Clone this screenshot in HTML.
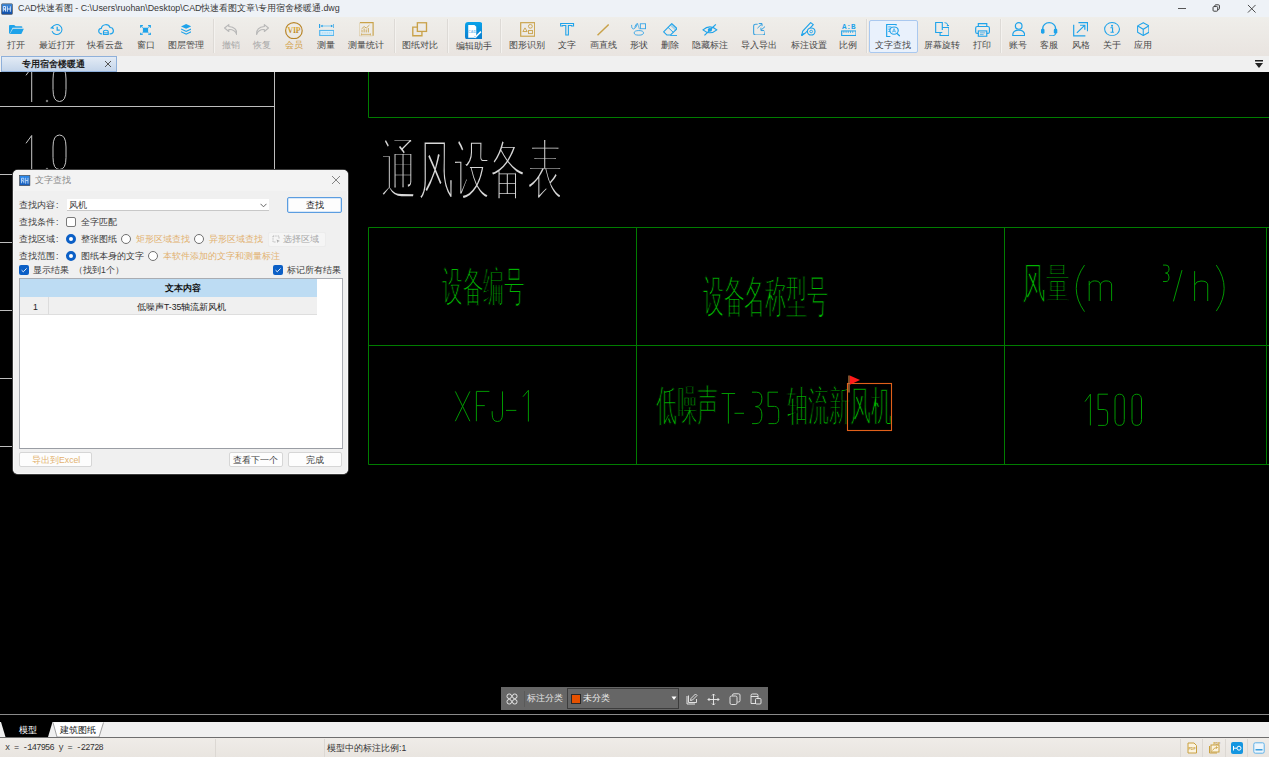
<!DOCTYPE html>
<html><head><meta charset="utf-8">
<style>
*{box-sizing:border-box;margin:0;padding:0}
html,body{width:1269px;height:757px;overflow:hidden;background:#000;font-family:"Liberation Sans",sans-serif}
.a{position:absolute}
#title{left:0;top:0;width:1269px;height:17px;background:#eef2f7}
#tb{left:0;top:17px;width:1269px;height:39px;background:linear-gradient(#efeeea,#e9e4e0)}
#tabs{left:0;top:56px;width:1269px;height:16px;background:#f0f0f0}
#canvas{left:0;top:72px;width:1269px;height:650px;background:#000;overflow:hidden}
#btabs{left:0;top:722px;width:1269px;height:16px;background:#f0f0f0}
#status{left:0;top:738px;width:1269px;height:19px;background:linear-gradient(#efece8,#e9e5e0)}
.lbl{position:absolute;top:24px;font-size:8.7px;color:#3e3e3e;white-space:nowrap;transform:translateX(-50%);line-height:10px}
.ic{position:absolute;top:5px;width:18px;height:18px;transform:translateX(-50%)}
.sep{position:absolute;top:2px;width:1px;height:34px;background:#dddad6;box-shadow:1px 0 0 #f4f2ef}
.dt{position:absolute;font-size:8.7px;line-height:10px;white-space:nowrap;color:#3c3c3c}
.rad{position:absolute;width:10px;height:10px;border-radius:50%;border:1px solid #707070;background:#fff}
.radon{position:absolute;width:10px;height:10px;border-radius:50%;background:#fff;border:3px solid #0b5fc6}
.cb{position:absolute;width:10px;height:10px;border:1px solid #7a7a7a;border-radius:2px;background:#fff}
.cbon{position:absolute;width:10px;height:10px;border-radius:2px;background:#0b5fc6}
.btn{position:absolute;background:#fdfdfd;border:1px solid #d6d6d6;border-radius:2px}
.or{color:#e2b270}
#dlg .dt{margin-top:0}
</style></head><body>
<div id="title" class="a">
  <svg class="a" style="left:1px;top:2.5px" width="12" height="12" viewBox="0 0 12 12"><defs><linearGradient id="tg" x1="0" y1="0" x2="0" y2="1"><stop offset="0" stop-color="#3a8ae0"/><stop offset="1" stop-color="#0c4aa6"/></linearGradient></defs><rect x="0.5" y="0.8" width="11" height="10.6" rx="0.8" fill="url(#tg)" stroke="#6b6b6b" stroke-width="0.8"/><path d="M2.3 3.5 V8.5 M2.3 3.5 H4.5 V8.5 M2.8 5 L4 7.2 M6.3 3.3 V8.8 M9.3 3.3 V8.8 M6.3 6 H9.3" stroke="#e8f2ff" stroke-width="0.9" fill="none"/></svg>
  <div class="a" style="left:18px;top:3px;font-size:8.9px;line-height:11px;color:#383838;white-space:nowrap">CAD快速看图 - C:\Users\ruohan\Desktop\CAD快速看图文章\专用宿舍楼暖通.dwg</div>
  <div class="a" style="left:1178px;top:8px;width:8px;height:1px;background:#555"></div>
  <svg class="a" style="left:1211.5px;top:4px" width="8.5" height="8" viewBox="0 0 10 10"><rect x="1" y="3.2" width="5.8" height="5.8" rx="1.2" fill="none" stroke="#3a3a3a" stroke-width="1.2"/><path d="M3.2 3.2 V2.2 Q3.2 1 4.4 1 H7.8 Q9 1 9 2.2 V5.6 Q9 6.8 7.8 6.8 H6.8" fill="none" stroke="#3a3a3a" stroke-width="1.2"/></svg>
  <svg class="a" style="left:1246.5px;top:3.5px" width="9.5" height="9.5" viewBox="0 0 10 10"><path d="M1 1 L9 9 M9 1 L1 9" stroke="#3a3a3a" stroke-width="0.95"/></svg>
</div>
<div id="tb" class="a">
<svg class="a" style="left:8.7px;top:8.1px" width="14.9" height="9.0" viewBox="2.0 3.5 14.50 11.00" preserveAspectRatio="none"><path d="M2 4.5 Q2 3.5 3 3.5 H7 L8.5 5 H14 Q15 5 15 6 V7 H5.5 L2.8 14 H2 Z" fill="#1fa3ea"/><path d="M5.8 8 H16.5 L14 14.5 H2.8 Z" fill="#1fa3ea"/></svg>
<div class="lbl" style="left:16px;top:23px;color:#484848">打开</div>
<svg class="a" style="left:50.1px;top:7.0px" width="12.6" height="11.0" viewBox="1.8 2.8 13.50 12.35" preserveAspectRatio="none"><path d="M4.2 6.5 A5.5 5.5 0 1 1 4 11" fill="none" stroke="#1fa3ea" stroke-width="1.15"/><path d="M1.8 7.5 L4.6 5 L6.2 8.3 Z" fill="#1fa3ea"/><path d="M9.5 6 V9.6 H12.3" fill="none" stroke="#1fa3ea" stroke-width="1.36"/></svg>
<div class="lbl" style="left:57px;top:23px;color:#484848">最近打开</div>
<svg class="a" style="left:97.7px;top:7.0px" width="16.1" height="11.0" viewBox="0.75 3.8 16.90 11.90" preserveAspectRatio="none"><path d="M5 14.5 H3.8 A3 3 0 0 1 4.2 8.6 A4.8 4.8 0 0 1 13.4 7.6 A3.5 3.5 0 0 1 14.2 14.5 H13" fill="none" stroke="#1fa3ea" stroke-width="1.27"/><path d="M6.5 15 V12.3 Q6.5 10.6 9 10.6 Q11.5 10.6 11.5 12.3 V15 Z" fill="none" stroke="#1fa3ea" stroke-width="1.19"/><path d="M6.5 13.2 H11.5" stroke="#1fa3ea" stroke-width="0.85"/></svg>
<div class="lbl" style="left:105px;top:23px;color:#484848">快看云盘</div>
<svg class="a" style="left:140.3px;top:7.6px" width="11.0" height="10.4" viewBox="1.6 1.6 14.80 14.80" preserveAspectRatio="none"><rect x="5.5" y="5.5" width="7" height="7" fill="#1fa3ea"/><path d="M2.5 5.5 V2.5 H5.5 M12.5 2.5 H15.5 V5.5 M15.5 12.5 V15.5 H12.5 M5.5 15.5 H2.5 V12.5" fill="none" stroke="#1fa3ea" stroke-width="1.53"/><path d="M3 3 L5.5 5.5 M15 3 L12.5 5.5 M15 15 L12.5 12.5 M3 15 L5.5 12.5" stroke="#1fa3ea" stroke-width="1.10"/></svg>
<div class="lbl" style="left:146px;top:23px;color:#484848">窗口</div>
<svg class="a" style="left:181.2px;top:7.3px" width="10.3" height="10.7" viewBox="3.0 2.0 12.00 13.50" preserveAspectRatio="none"><path d="M9 2 L15 5 L9 8 L3 5 Z" fill="#1fa3ea"/><path d="M3.2 7.6 L9 10.5 L14.8 7.6 L15 9 L9 12 L3 9 Z" fill="#1fa3ea"/><path d="M3.2 11 L9 14 L14.8 11 L15 12.5 L9 15.5 L3 12.5 Z" fill="#1fa3ea"/></svg>
<div class="lbl" style="left:186px;top:23px;color:#484848">图层管理</div>
<div class="sep" style="left:212.5px"></div>
<svg class="a" style="left:223.6px;top:7.0px" width="13.4" height="11.0" viewBox="1.95 3.45 12.65 11.10" preserveAspectRatio="none"><path d="M6.5 4 L2.5 7.5 L6.5 11 V9 Q12 8.5 14 14 Q14.5 6.5 6.5 6 Z" fill="none" stroke="#b8b8b8" stroke-width="1.1" stroke-linejoin="round"/></svg>
<div class="lbl" style="left:231px;top:23px;color:#a9a9a9">撤销</div>
<svg class="a" style="left:256.0px;top:7.0px" width="13.0" height="11.0" viewBox="3.4 3.45 12.65 11.10" preserveAspectRatio="none"><path d="M11.5 4 L15.5 7.5 L11.5 11 V9 Q6 8.5 4 14 Q3.5 6.5 11.5 6 Z" fill="none" stroke="#b8b8b8" stroke-width="1.1" stroke-linejoin="round"/></svg>
<div class="lbl" style="left:262px;top:23px;color:#a9a9a9">恢复</div>
<svg class="a" style="left:285.0px;top:5.0px" width="17.8" height="17.3" viewBox="0.2 0.2 17.60 17.60" preserveAspectRatio="none"><defs><linearGradient id="vg" x1="0" y1="0" x2="0" y2="1"><stop offset="0" stop-color="#e6b43c"/><stop offset="1" stop-color="#a8741a"/></linearGradient></defs><circle cx="9" cy="9" r="8.2" fill="none" stroke="#b8862a" stroke-width="1.2"/><text x="9" y="11.8" font-family="Liberation Serif" font-weight="bold" font-size="7.8" fill="url(#vg)" text-anchor="middle" letter-spacing="-0.3">VIP</text></svg>
<div class="lbl" style="left:294px;top:23px;color:#d2a24c">会员</div>
<svg class="a" style="left:318.5px;top:7.0px" width="15.5" height="12.1" viewBox="1.95 2.5 14.10 12.15" preserveAspectRatio="none"><path d="M2.5 2.5 V6.5 M15.5 2.5 V6.5" stroke="#1a9be6" stroke-width="0.94"/><path d="M4.5 4.5 H13.5" stroke="#8fd0f2" stroke-width="1.27"/><path d="M3.2 4.5 L5.2 3.2 V5.8 Z M14.8 4.5 L12.8 3.2 V5.8 Z" fill="#1a9be6"/><rect x="2.6" y="9" width="12.8" height="5" fill="#d9eefa" stroke="#55b6ee" stroke-width="1.10"/><path d="M4.5 11.5 H13.5" stroke="#8fd0f2" stroke-width="0.85" stroke-dasharray="1 0.6"/></svg>
<div class="lbl" style="left:326px;top:23px;color:#484848">测量</div>
<svg class="a" style="left:358.9px;top:5.4px" width="14.8" height="14.2" viewBox="2.15 1.35 14.00 14.50" preserveAspectRatio="none"><path d="M3 2 H15.5 V15.5" fill="none" stroke="#c9a24a" stroke-width="1.10"/><path d="M2.5 2.2 V15.5 H15" fill="none" stroke="#c9a24a" stroke-width="0.59" opacity="0.5"/><path d="M4.5 8.5 L7 6 L9 7.5 L12 4.5" fill="none" stroke="#c9a24a" stroke-width="0.85"/><path d="M5 12 V9.5 M7 12 V8 M9 12 V9 M11 12 V7.5" stroke="#c9a24a" stroke-width="0.85"/><path d="M4.5 14 H13 M4.5 13 V15 M13 13 V15" stroke="#c9a24a" stroke-width="0.68"/></svg>
<div class="lbl" style="left:366px;top:23px;color:#484848">测量统计</div>
<div class="sep" style="left:393.5px"></div>
<svg class="a" style="left:412.3px;top:5.4px" width="15.3" height="14.5" viewBox="2.3 1.8 13.40 13.40" preserveAspectRatio="none"><rect x="7" y="2.5" width="8" height="8" fill="none" stroke="#c9a24a" stroke-width="1.19"/><path d="M7 6.5 H3 V14.5 H11 V10.5" fill="none" stroke="#c9a24a" stroke-width="1.19"/></svg>
<div class="lbl" style="left:420px;top:23px;color:#484848">图纸对比</div>
<div class="sep" style="left:446.5px"></div>
<svg class="a" style="left:464.6px;top:4.5px" width="17.7" height="17.8" viewBox="0.5 0.5 17.00 17.00" preserveAspectRatio="none"><defs><linearGradient id="ag" x1="0" y1="0" x2="0" y2="1"><stop offset="0" stop-color="#0aa3ea"/><stop offset="1" stop-color="#0b7ccc"/></linearGradient></defs><rect x="0.5" y="0.5" width="17" height="17" rx="3.2" fill="url(#ag)"/><path d="M3.6 3.3 H9.6 L11.3 5 V15.5 H3.6 Z" fill="#fff"/><text x="7.3" y="10.8" font-family="Liberation Sans" font-weight="bold" font-size="3.6" fill="#7fc0ee" text-anchor="middle">CAD</text><path d="M9.3 15.2 L15.3 9.2 L16.3 10.2 L10.5 16 Z" fill="#fff"/><path d="M9.6 13.8 L10.8 15.2" stroke="#0b86d6" stroke-width="0.5"/></svg>
<div class="lbl" style="left:473.5px;top:24px;color:#484848">编辑助手</div>
<div class="sep" style="left:499.5px"></div>
<svg class="a" style="left:519.8px;top:5.0px" width="15.4" height="14.9" viewBox="1.85 1.85 14.30 14.30" preserveAspectRatio="none"><rect x="2.5" y="2.5" width="13" height="13" fill="none" stroke="#c9a24a" stroke-width="1.10"/><path d="M4.5 11 L6.5 7.5 L8.5 11 Z" fill="none" stroke="#c9a24a" stroke-width="0.85"/><circle cx="11.5" cy="6" r="1.8" fill="none" stroke="#c9a24a" stroke-width="0.85"/><rect x="9.8" y="10" width="3.6" height="3" fill="none" stroke="#c9a24a" stroke-width="0.85"/></svg>
<div class="lbl" style="left:527px;top:23px;color:#484848">图形识别</div>
<svg class="a" style="left:560.4px;top:6.0px" width="14.2" height="12.7" viewBox="1.85 1.85 14.30 13.80" preserveAspectRatio="none"><path d="M2.5 2.5 H15.5 V5 H13.5 V4.5 H10.3 V15 H7.7 V4.5 H4.5 V5 H2.5 Z" fill="none" stroke="#1fa3ea" stroke-width="1.10"/></svg>
<div class="lbl" style="left:567px;top:23px;color:#484848">文字</div>
<svg class="a" style="left:597.0px;top:7.0px" width="12.2" height="11.7" viewBox="2.45 2.45 13.10 13.10" preserveAspectRatio="none"><path d="M3 15 L15 3" stroke="#c9a24a" stroke-width="1.5"/></svg>
<div class="lbl" style="left:603px;top:23px;color:#484848">画直线</div>
<svg class="a" style="left:631.3px;top:6.0px" width="15.1" height="12.7" viewBox="3.2 3.0 14.55 13.30" preserveAspectRatio="none"><rect x="12.2" y="3.8" width="5" height="5.2" fill="none" stroke="#3aa6e6" stroke-width="0.94"/><ellipse cx="10.75" cy="13.35" rx="4.5" ry="2.4" fill="none" stroke="#3aa6e6" stroke-width="0.94"/><path d="M3.8 5 Q3.6 9.4 5.8 9.2 Q8 8.8 9.5 3.6 Q8 3.2 6.8 7.6" fill="none" stroke="#3aa6e6" stroke-width="0.94"/><path d="M9.6 3.6 L11.3 9.5" stroke="#3aa6e6" stroke-width="0.68"/></svg>
<div class="lbl" style="left:638.6px;top:23px;color:#484848">形状</div>
<svg class="a" style="left:662.8px;top:5.7px" width="14.7" height="13.0" viewBox="1.35 1.35 15.30 14.20" preserveAspectRatio="none"><path d="M10.5 2 L16 7.5 L9 14.5 H5.5 L2 11 Z" fill="none" stroke="#1fa3ea" stroke-width="1.10" stroke-linejoin="round"/><path d="M6.5 6 L12 11.5" stroke="#1fa3ea" stroke-width="1.02"/><path d="M8 3.5 L14.5 10 L16 7.5 L10.5 2 Z" fill="#1fa3ea" opacity="0.35"/><path d="M9 15 H16" stroke="#1fa3ea" stroke-width="0.94"/></svg>
<div class="lbl" style="left:670px;top:23px;color:#484848">删除</div>
<svg class="a" style="left:702.2px;top:7.0px" width="15.8" height="11.7" viewBox="1.0 2.05 16.00 13.90" preserveAspectRatio="none"><path d="M2 9 Q9 2 16 9 Q9 16 2 9 Z" fill="none" stroke="#1fa3ea" stroke-width="1.19"/><circle cx="9" cy="9" r="2.2" fill="#1fa3ea"/><path d="M3.5 15.5 L15 2.5" stroke="#1fa3ea" stroke-width="1.19"/></svg>
<div class="lbl" style="left:710px;top:23px;color:#484848">隐藏标注</div>
<svg class="a" style="left:752.6px;top:5.7px" width="12.7" height="12.6" viewBox="5.1 3.05 11.95 12.75" preserveAspectRatio="none"><path d="M9.5 4.3 H7.7 Q5.7 4.3 5.7 6.3 V13.2 Q5.7 15.2 7.7 15.2 H14.4 Q16.4 15.2 16.4 13.2 V11.4" fill="none" stroke="#3aa3e0" stroke-width="1.02"/><path d="M9.3 8.3 L13.4 4 M10.5 3.6 H13.6 V6.3 M16.7 6.4 L12.9 10 M12.6 7.8 V10.7 H15.6" fill="none" stroke="#2a9ce0" stroke-width="0.94"/></svg>
<div class="lbl" style="left:759px;top:23px;color:#484848">导入导出</div>
<svg class="a" style="left:801.3px;top:5.0px" width="14.7" height="14.1" viewBox="2.35 1.85 13.90 14.30" preserveAspectRatio="none"><path d="M3 15.5 L4 11 L11.5 2.5 L14 4.5 L6.5 13 Z" fill="none" stroke="#1fa3ea" stroke-width="1.10" stroke-linejoin="round"/><path d="M3 15.5 L5 13.5" stroke="#1fa3ea" stroke-width="1.27"/><circle cx="12" cy="11.5" r="3.6" fill="#ede9e5" stroke="#1fa3ea" stroke-width="1.10"/><circle cx="12" cy="11.5" r="1.3" fill="none" stroke="#1fa3ea" stroke-width="0.85"/></svg>
<div class="lbl" style="left:808.6px;top:23px;color:#484848">标注设置</div>
<svg class="a" style="left:840.7px;top:7.0px" width="15.7" height="12.1" viewBox="1.9 3.1 14.20 12.00" preserveAspectRatio="none"><text x="9" y="7.6" font-family="Liberation Mono" font-weight="bold" font-size="6.8" fill="#1fa3ea" text-anchor="middle">A:B</text><rect x="2.5" y="10" width="13" height="4.5" fill="none" stroke="#1fa3ea" stroke-width="1.02"/><path d="M4.5 10 V12 M6.5 10 V12 M8.5 10 V12 M10.5 10 V12 M12.5 10 V12" stroke="#1fa3ea" stroke-width="0.68"/></svg>
<div class="lbl" style="left:848px;top:23px;color:#484848">比例</div>
<div class="sep" style="left:866.0px"></div>
<div class="a" style="left:869px;top:2.6px;width:48.5px;height:33.4px;background:#e9f1fc;border:1px solid #a9c8ef;border-radius:2px"></div>
<svg class="a" style="left:885.6px;top:6.5px" width="14.4" height="13.1" viewBox="2.85 1.85 13.70 14.30" preserveAspectRatio="none"><path d="M12.5 3.5 V2.5 H3.5 V15.5 H7" fill="none" stroke="#1fa3ea" stroke-width="1.10"/><path d="M5 5 H8 M5 7.5 H7 M5 10 H7" stroke="#1fa3ea" stroke-width="0.85"/><circle cx="10.5" cy="9" r="4" fill="none" stroke="#1fa3ea" stroke-width="1.10"/><path d="M13.3 12 L16 15" stroke="#1fa3ea" stroke-width="1.27"/><path d="M9 11 L10.5 6.8 L12 11 M9.5 9.8 H11.5" fill="none" stroke="#1fa3ea" stroke-width="0.68"/></svg>
<div class="lbl" style="left:893px;top:23px;color:#484848">文字查找</div>
<svg class="a" style="left:934.8px;top:5.4px" width="14.6" height="14.2" viewBox="2.4 1.9 13.20 14.20" preserveAspectRatio="none"><path d="M9 10 V2.5 H3 V12.5 H9" fill="none" stroke="#1fa3ea" stroke-width="1.02"/><path d="M9 7.5 H15 V15.5 H7 V12.5" fill="none" stroke="#1fa3ea" stroke-width="1.02"/><path d="M11 2.5 Q14 2.5 14 5.5" fill="none" stroke="#1fa3ea" stroke-width="0.85"/><path d="M12.8 5 L14 6.5 L15.2 5 Z" fill="#1fa3ea"/></svg>
<div class="lbl" style="left:942px;top:23px;color:#484848">屏幕旋转</div>
<svg class="a" style="left:974.8px;top:5.7px" width="15.1" height="13.9" viewBox="1.85 1.85 14.30 14.30" preserveAspectRatio="none"><path d="M5 5.5 V2.5 H13 V5.5" fill="none" stroke="#1fa3ea" stroke-width="1.10"/><rect x="2.5" y="5.5" width="13" height="7" rx="1.5" fill="none" stroke="#1fa3ea" stroke-width="1.10"/><rect x="5" y="10" width="8" height="5.5" fill="#ebe7e3" stroke="#1fa3ea" stroke-width="1.10"/><path d="M6.5 12 H11.5 M6.5 13.8 H10" stroke="#1fa3ea" stroke-width="0.68"/></svg>
<div class="lbl" style="left:982px;top:23px;color:#484848">打印</div>
<div class="sep" style="left:1000.2px"></div>
<svg class="a" style="left:1011.5px;top:5.4px" width="13.4" height="14.2" viewBox="1.75 1.15 14.50 15.60" preserveAspectRatio="none"><circle cx="9" cy="5.5" r="3.6" fill="none" stroke="#1fa3ea" stroke-width="1.27"/><path d="M2.5 16 Q2.5 10 9 10 Q15.5 10 15.5 16 Z" fill="none" stroke="#1fa3ea" stroke-width="1.27" stroke-linejoin="round"/></svg>
<div class="lbl" style="left:1018px;top:23px;color:#484848">账号</div>
<svg class="a" style="left:1041.4px;top:5.4px" width="16.3" height="14.2" viewBox="2.0 2.3 14.00 14.25" preserveAspectRatio="none"><path d="M3.5 11 V8.5 A5.5 5.5 0 0 1 14.5 8.5 V11" fill="none" stroke="#1fa3ea" stroke-width="1.19"/><rect x="2" y="9" width="3" height="5" rx="1.3" fill="#1fa3ea"/><rect x="13" y="9" width="3" height="5" rx="1.3" fill="#1fa3ea"/><path d="M14.5 13.5 Q14.5 16 11 16 H9" fill="none" stroke="#1fa3ea" stroke-width="0.94"/></svg>
<div class="lbl" style="left:1049px;top:23px;color:#484848">客服</div>
<svg class="a" style="left:1073.0px;top:5.0px" width="15.2" height="14.6" viewBox="1.85 1.85 14.30 14.30" preserveAspectRatio="none"><path d="M7 2.5 H15.5 V11" fill="none" stroke="#1fa3ea" stroke-width="1.10"/><path d="M2.5 4.5 V15.5 H13.5" fill="none" stroke="#1fa3ea" stroke-width="1.10"/><path d="M5.5 12.5 L13 5 M8.5 5 H13 V9.5" fill="none" stroke="#1fa3ea" stroke-width="1.10"/></svg>
<div class="lbl" style="left:1080.6px;top:23px;color:#484848">风格</div>
<svg class="a" style="left:1103.7px;top:5.4px" width="16.1" height="14.2" viewBox="1.2 1.2 15.60 15.60" preserveAspectRatio="none"><circle cx="9" cy="9" r="7.2" fill="none" stroke="#1fa3ea" stroke-width="1.02"/><circle cx="9" cy="5.3" r="1" fill="#1fa3ea"/><path d="M7.5 7.5 H9.5 V12.5 M7.5 12.5 H10.8" fill="none" stroke="#1fa3ea" stroke-width="1.10"/></svg>
<div class="lbl" style="left:1112px;top:23px;color:#484848">关于</div>
<svg class="a" style="left:1136.5px;top:5.4px" width="12.5" height="14.2" viewBox="1.8 1.3 14.40 15.40" preserveAspectRatio="none"><path d="M9 2 L15.5 5.5 V12.5 L9 16 L2.5 12.5 V5.5 Z" fill="none" stroke="#1fa3ea" stroke-width="1.19" stroke-linejoin="round"/><path d="M2.8 5.7 L9 9.2 L15.2 5.7 M9 9.2 V15.8" fill="none" stroke="#1fa3ea" stroke-width="1.19"/></svg>
<div class="lbl" style="left:1143px;top:23px;color:#484848">应用</div>
</div>
<div id="tabs" class="a">
  <div class="a" style="left:1px;top:0;width:116px;height:16px;background:linear-gradient(#e3ebf5,#c4d5ea);border:1px solid #8fb0da"></div>
  <div class="a" style="left:22px;top:3px;font-size:9px;line-height:10px;font-weight:bold;color:#1e1e1e;white-space:nowrap">专用宿舍楼暖通</div>
  <svg class="a" style="left:104px;top:4px" width="8" height="8" viewBox="0 0 8 8"><path d="M1 1 L7 7 M7 1 L1 7" stroke="#555" stroke-width="1"/></svg>
  <svg class="a" style="left:1254px;top:3px" width="10" height="10" viewBox="0 0 10 10"><rect x="1" y="1" width="8" height="1.5" fill="#222"/><path d="M1 4 H9 L5 9 Z" fill="#222"/></svg>
</div>
<div id="canvas" class="a">
<svg class="a" style="left:0;top:0" width="1269" height="650" viewBox="0 0 1269 650">
<g stroke="#bdbdbd" stroke-width="1" fill="none">
<path d="M0 34.5 H274.5 M274.5 0 V120 M0 102.5 H20 M0 170.5 H20 M0 238.5 H20 M0 306.5 H20 M0 374.5 H20"/>
</g>
<g stroke="#007c00" stroke-width="1" fill="none">
<path d="M368.5 0 V45.5 H1269"/>
<path d="M368.5 155.5 H1269 M368.5 155.5 V392.5 H1269 M368.5 273.5 H1269 M636.5 155.5 V392.5 M1004.5 155.5 V392.5 M1266.5 155.5 V392.5"/>
</g>
<!--CAD-->
<g transform="translate(0,-72)">
<text transform="matrix(0.3621 0 0 0.6531 381.41 192.01)" font-family="Liberation Sans" font-size="100" fill="#d8d8d8" stroke="#000" stroke-width="4.1">通风设备表</text>
<text transform="matrix(0.2058 0 0 0.4175 442.00 301.07)" font-family="Liberation Sans" font-size="100" fill="#00b400" stroke="#000" stroke-width="3.3">设备编号</text>
<text transform="matrix(0.2084 0 0 0.4463 702.60 311.60)" font-family="Liberation Sans" font-size="100" fill="#00b400" stroke="#000" stroke-width="3.3">设备名称型号</text>
<text transform="matrix(0.2383 0 0 0.4337 1022.28 297.76)" font-family="Liberation Sans" font-size="100" fill="#00b400" stroke="#000" stroke-width="3.3">风量</text>
<text transform="matrix(0.2054 0 0 0.4260 656.40 419.64)" font-family="Liberation Sans" font-size="100" fill="#00b400" stroke="#000" stroke-width="3.3">低噪声</text>
<text transform="matrix(0.2103 0 0 0.4131 786.79 419.82)" font-family="Liberation Sans" font-size="100" fill="#00b400" stroke="#000" stroke-width="3.3">轴流新风机</text>
<path d="M26 75.3 L31.7 67.5 V102 M53 79 Q53 67 59.5 67 Q66 67 66 79 V89.5 Q66 101.5 59.5 101.5 Q53 101.5 53 89.5 Z" fill="none" stroke="#c8c8c8" stroke-width="1"/>
<path d="M26 143.3 L31.7 135.5 V170 M53 147 Q53 135 59.5 135 Q66 135 66 147 V157.5 Q66 169.5 59.5 169.5 Q53 169.5 53 157.5 Z" fill="none" stroke="#c8c8c8" stroke-width="1"/>
<path d="M455.3 391.4 L469.9 421.2 M469.9 391.4 L455.3 421.2 M489.4 391.4 H476.4 V421.2 M476.4 405.6 H484.8 M502.5 391.4 V414 Q502.5 421.5 497.4 421.5 Q492.2 421.5 492.2 414 V411.2 M506 410.4 H516.3 M523 396.7 L528.4 390.3 V421.5" fill="none" stroke="#009800" stroke-width="1"/>
<path d="M721.6 393.5 H735.1 M728.4 393.5 V423.6 M734.5 413.3 H744 M752 392.2 H756.5 Q761.9 392.2 761.9 398.5 Q761.9 406.6 755.5 406.6 Q761.9 406.6 761.9 415 Q761.9 423.6 756 423.6 H752 M778 392.2 H768.1 V406.4 H774.5 Q778.7 406.4 778.7 412 V418.5 Q778.7 423.6 774.5 423.6 H768.5" fill="none" stroke="#009800" stroke-width="1"/>
<path d="M1085 401.6 L1090.4 394.2 V425.4 M1107.9 394.2 H1098.1 V409.5 H1104.4 Q1107.6 409.5 1107.6 413 V421 Q1107.6 425.4 1104.4 425.4 H1098.1 M1115 400 Q1115 394.2 1119.65 394.2 Q1124.3 394.2 1124.3 400 V419.6 Q1124.3 425.4 1119.65 425.4 Q1115 425.4 1115 419.6 Z M1132 400 Q1132 394.2 1136.75 394.2 Q1141.5 394.2 1141.5 400 V419.6 Q1141.5 425.4 1136.75 425.4 Q1132 425.4 1132 419.6 Z" fill="none" stroke="#009800" stroke-width="1"/>
<path d="M1084.5 265.1 Q1068 288.4 1084.5 311.7 M1089.2 280.9 V301 M1089.2 285 Q1090.5 280.9 1094.7 280.9 Q1100.3 280.9 1100.3 285 V301 M1100.3 285 Q1101.5 280.9 1106 280.9 Q1111.6 280.9 1111.6 285 V301 M1163 265.1 H1166 Q1169 265.1 1169 268.5 Q1169 273 1165.5 273 Q1169 273 1169 277 Q1169 281.5 1166 281.5 H1163 M1182 270.1 L1173.4 301.4 M1194.6 271.1 V301 M1194.6 285 Q1196 281 1201 281 Q1207.7 281 1207.7 285 V301 M1216.3 265.1 Q1232 288.4 1216.3 311.1" fill="none" stroke="#009800" stroke-width="1"/>
<circle cx="47" cy="101" r="0.8" fill="none" stroke="#c8c8c8" stroke-width="0.7"/>
<circle cx="47" cy="169" r="0.8" fill="none" stroke="#c8c8c8" stroke-width="0.7"/>
<rect x="847.5" y="383.5" width="44" height="47" fill="none" stroke="#e0601a" stroke-width="1.1"/>
<path d="M849 375.5 V392.5" stroke="#b87a40" stroke-width="1.3"/>
<path d="M849.8 375.5 L860 380 L849.8 384.7 Z" fill="#ff1a1a"/>
</g>
<!--/CAD-->
<path d="M0 642.5 H1269" stroke="#8a8a8a" stroke-width="1.2"/>
</svg>
</div>
<div id="dlg" class="a" style="left:13px;top:170px;width:335px;height:304px;background:#f0f0f0;border-radius:5px;overflow:hidden;box-shadow:0 0 0 1px #3c3c3c, inset 0 0 0 1px #f9f9f9">
<div class="a" style="left:0;top:0;width:335px;height:21px;background:#f3f3f3"></div>
<svg class="a" style="left:6px;top:4.5px" width="11.5" height="11" viewBox="0 0 12 12"><defs><linearGradient id="dg" x1="0" y1="0" x2="0" y2="1"><stop offset="0" stop-color="#2b8cf0"/><stop offset="1" stop-color="#1559b8"/></linearGradient></defs><rect x="0.4" y="0.4" width="11.2" height="11.2" fill="url(#dg)" stroke="#4a4a4a" stroke-width="0.7"/><path d="M2.5 3.5 V9 M2.5 3.5 H5 V9 M3 5 L4.5 7.5 M7 3 V9.5 M9.5 3 V9.5 M7 6 H9.5" stroke="#dfeeff" stroke-width="0.8" fill="none"/></svg>
<div class="a dt" style="left:22px;top:5px;font-size:9px;color:#8a8a8a">文字查找</div>
<svg class="a" style="left:318px;top:5px" width="10" height="10" viewBox="0 0 10 10"><path d="M1 1 L9 9 M9 1 L1 9" stroke="#777" stroke-width="0.9"/></svg>
<div class="dt" style="left:6px;top:30px">查找内容<span style="margin-left:1px">:</span></div>
<div class="a" style="left:54px;top:29px;width:202px;height:12px;background:#fff;border-bottom:1px solid #c8c8c8"></div>
<div class="dt" style="left:56px;top:30px">风机</div>
<svg class="a" style="left:247px;top:33px" width="7" height="5" viewBox="0 0 7 5"><path d="M0.5 0.8 L3.5 3.8 L6.5 0.8" fill="none" stroke="#555" stroke-width="0.9"/></svg>
<div class="btn" style="left:274px;top:27px;width:55px;height:16px;border:1px solid #5b9de0;box-shadow:0 0 0 0.6px #b6d4f3 inset"></div>
<div class="dt" style="left:293px;top:30px;color:#222">查找</div>
<div class="dt" style="left:6px;top:47px">查找条件<span style="margin-left:1px">:</span></div>
<div class="cb" style="left:53px;top:47px"></div>
<div class="dt" style="left:68px;top:47px">全字匹配</div>
<div class="dt" style="left:6px;top:64px">查找区域<span style="margin-left:1px">:</span></div>
<div class="radon" style="left:53px;top:64px"></div>
<div class="dt" style="left:68px;top:64px">整张图纸</div>
<div class="rad" style="left:108px;top:64px"></div>
<div class="dt or" style="left:123px;top:64px">矩形区域查找</div>
<div class="rad" style="left:181px;top:64px"></div>
<div class="dt or" style="left:196px;top:64px">异形区域查找</div>
<div class="btn" style="left:255px;top:62px;width:58px;height:15px;background:#f5f5f5;border:1px solid #ececec"></div>
<svg class="a" style="left:259px;top:65px" width="9" height="9" viewBox="0 0 9 9"><path d="M1 1 H7 V4 M1 1 V7 H4" fill="none" stroke="#aaa" stroke-width="0.8" stroke-dasharray="1 0.7"/><path d="M4.5 4.5 L8 6 L6.3 6.5 L5.8 8.3 Z" fill="#aaa"/></svg>
<div class="dt" style="left:270px;top:64px;color:#a8a8a8">选择区域</div>
<div class="dt" style="left:6px;top:81px">查找范围<span style="margin-left:1px">:</span></div>
<div class="radon" style="left:53px;top:81px"></div>
<div class="dt" style="left:68px;top:81px">图纸本身的文字</div>
<div class="rad" style="left:135px;top:81px"></div>
<div class="dt or" style="left:150px;top:81px">本软件添加的文字和测量标注</div>
<div class="cbon" style="left:6px;top:95px"></div>
<svg class="a" style="left:6px;top:95px" width="10" height="10" viewBox="0 0 10 10"><path d="M2.6 5.2 L4.3 6.8 L7.6 3.4" fill="none" stroke="#fff" stroke-width="0.9"/></svg>
<div class="dt" style="left:20px;top:95px">显示结果</div>
<div class="dt" style="left:61px;top:95px">（找到1个）</div>
<div class="cbon" style="left:260px;top:95px"></div>
<svg class="a" style="left:260px;top:95px" width="10" height="10" viewBox="0 0 10 10"><path d="M2.6 5.2 L4.3 6.8 L7.6 3.4" fill="none" stroke="#fff" stroke-width="0.9"/></svg>
<div class="dt" style="left:274px;top:95px">标记所有结果</div>
<div class="a" style="left:6px;top:108px;width:324px;height:171px;background:#fff;border:1px solid #a9acb2;border-bottom:1.5px solid #9a9da4"></div>
<div class="a" style="left:7px;top:109px;width:297px;height:18px;background:#bddcf3"></div>
<div class="a" style="left:7px;top:127px;width:297px;height:18px;background:#f0f0f0;border-bottom:1px solid #dedede"></div>
<div class="a" style="left:35px;top:127px;width:1px;height:18px;background:#dcdcdc"></div>
<div class="dt" style="left:152px;top:113px;font-weight:bold;color:#111">文本内容</div>
<div class="dt" style="left:20px;top:132px;color:#222">1</div>
<div class="dt" style="left:124px;top:132px;color:#222">低噪声T-35轴流新风机</div>
<div class="btn" style="left:6px;top:282px;width:73px;height:15px"></div>
<div class="dt or" style="left:19px;top:285px">导出到Excel</div>
<div class="btn" style="left:216px;top:282px;width:54px;height:15px"></div>
<div class="dt" style="left:220px;top:285px">查看下一个</div>
<div class="btn" style="left:275px;top:282px;width:54px;height:15px"></div>
<div class="dt" style="left:293px;top:285px">完成</div>
</div>
<div id="btb" class="a" style="left:501px;top:687px;width:267px;height:23px;background:#666">
<svg class="a" style="left:5px;top:6px" width="12" height="12" viewBox="0 0 12 12"><g fill="none" stroke="#f0f0f0" stroke-width="0.9"><rect x="1" y="1" width="4.5" height="4.5" rx="2"/><rect x="6.5" y="1" width="4.5" height="4.5" rx="2"/><rect x="1" y="6.5" width="4.5" height="4.5" rx="2"/><rect x="6.5" y="6.5" width="4.5" height="4.5" rx="2"/></g></svg>
<div class="a" style="left:23px;top:4px;width:1px;height:16px;background:#5a5a5a"></div>
<div class="dt" style="left:26px;top:6px;color:#e6e6e6">标注分类</div>
<div class="a" style="left:66px;top:1px;width:112px;height:21px;border:1px solid #3c3c3c;background:#666"></div>
<div class="a" style="left:69.5px;top:6.5px;width:10px;height:10px;background:#e65100;border:1px solid #2a2a2a"></div>
<div class="dt" style="left:82px;top:6px;color:#f0f0f0">未分类</div>
<svg class="a" style="left:170px;top:9px" width="6" height="5" viewBox="0 0 6 5"><path d="M0.5 0.5 H5.5 L3 4 Z" fill="#fff"/></svg>
<svg class="a" style="left:185px;top:6px" width="12" height="12" viewBox="0 0 12 12"><g fill="none" stroke="#eee" stroke-width="0.9"><path d="M1 3 V11 H9"/><path d="M2.5 2.5 V9.5 H10.5 V6"/><path d="M4.5 7.5 L5 5.5 L9.5 1 L11 2.5 L6.5 7 Z"/></g></svg>
<svg class="a" style="left:206px;top:6px" width="13" height="13" viewBox="0 0 13 13"><g fill="none" stroke="#eee" stroke-width="0.9"><path d="M6.5 1 V12 M1 6.5 H12"/><path d="M5 2.5 L6.5 1 L8 2.5 M5 10.5 L6.5 12 L8 10.5 M2.5 5 L1 6.5 L2.5 8 M10.5 5 L12 6.5 L10.5 8"/></g></svg>
<svg class="a" style="left:228px;top:6px" width="12" height="12" viewBox="0 0 12 12"><g fill="none" stroke="#eee" stroke-width="0.9"><rect x="1" y="3" width="7" height="8.5" rx="1.5"/><path d="M3.5 2.5 V2 Q3.5 0.8 5 0.8 H9.5 Q11 0.8 11 2 V7.5 Q11 9 9.5 9 H8.5"/></g></svg>
<svg class="a" style="left:249px;top:6px" width="12" height="12" viewBox="0 0 12 12"><g fill="none" stroke="#eee" stroke-width="0.9"><path d="M6 10.5 H1 V2.5 Q1 1 2.5 1 H6.5 Q8 1 8 2.5 V5"/><rect x="5.5" y="5.5" width="5.5" height="5.5" rx="1"/><path d="M1 3.5 H8"/></g></svg>
</div>
<div id="btabs" class="a">
<svg class="a" style="left:0;top:0" width="220" height="16" viewBox="0 0 220 16">
<path d="M1 0 L5.5 15 H48 L52.5 0 Z" fill="#000"/>
<path d="M53 0.5 L57 15 H99 L103.5 0.5" fill="#fff" stroke="#8a8a8a" stroke-width="0.8"/>
</svg>
<div class="a" style="left:0;top:15px;width:1269px;height:1px;background:#6e6e6e"></div>
<div class="dt" style="left:19px;top:3px;font-size:9px;color:#fff">模型</div>
<div class="dt" style="left:60px;top:3px;font-size:9px;color:#111">建筑图纸</div>
</div>
<div id="status" class="a">
<div class="a" style="left:215px;top:1px;width:1px;height:18px;background:#dcd8d3"></div>
<div class="a" style="left:324px;top:1px;width:1px;height:18px;background:#dcd8d3"></div>
<div class="a" style="left:1180px;top:1px;width:1px;height:18px;background:#dcd8d3"></div>
<div class="a" style="left:1202px;top:1px;width:1px;height:18px;background:#dcd8d3"></div>
<div class="a" style="left:1225px;top:1px;width:1px;height:18px;background:#dcd8d3"></div>
<div class="a" style="left:1247px;top:1px;width:1px;height:18px;background:#dcd8d3"></div>
<div class="dt" style="left:5px;top:5px;font-family:'Liberation Mono',monospace;font-size:8.6px;letter-spacing:-0.7px;color:#333">x = -147956 y = -22728</div>
<div class="dt" style="left:327px;top:5px;color:#333">模型中的标注比例:1</div>
<svg class="a" style="left:1186px;top:4px" width="12" height="12" viewBox="0 0 12 12"><path d="M2 1 H8 L10.5 3.5 V11 H2 Z" fill="#fbf3df" stroke="#c9a040" stroke-width="1"/><text x="6" y="8" font-family="Liberation Sans" font-size="3.6" font-weight="bold" fill="#c9a040" text-anchor="middle">PDF</text></svg>
<svg class="a" style="left:1208px;top:4px" width="13" height="12" viewBox="0 0 13 12"><path d="M1.5 4 V11 H9" fill="none" stroke="#c9a040" stroke-width="1"/><rect x="3" y="3" width="8" height="7" fill="#fbf3df" stroke="#c9a040" stroke-width="1"/><path d="M4.5 8.5 Q6 5.5 9 5.5 M8 4.5 L9.5 5.5 L8 6.5" fill="none" stroke="#c9a040" stroke-width="0.9"/><text x="9" y="3" font-family="Liberation Sans" font-size="3.5" font-weight="bold" fill="#c9a040" text-anchor="middle">PDF</text></svg>
<svg class="a" style="left:1231px;top:4px" width="12" height="12" viewBox="0 0 12 12"><rect x="0" y="0" width="12" height="12" rx="2" fill="#1596e0"/><path d="M2.5 4 V8.5 M2.5 6.2 H6" stroke="#fff" stroke-width="1"/><circle cx="8" cy="6.2" r="2" fill="none" stroke="#fff" stroke-width="1"/></svg>
<svg class="a" style="left:1253px;top:4px" width="12" height="12" viewBox="0 0 12 12"><rect x="0.8" y="0.8" width="10.4" height="10.4" rx="1.5" fill="#eef6fc" stroke="#5fb1e8" stroke-width="1"/><path d="M2.5 7.8 H9.5" stroke="#1d8fd8" stroke-width="1.3"/></svg>
</div>
</body></html>
